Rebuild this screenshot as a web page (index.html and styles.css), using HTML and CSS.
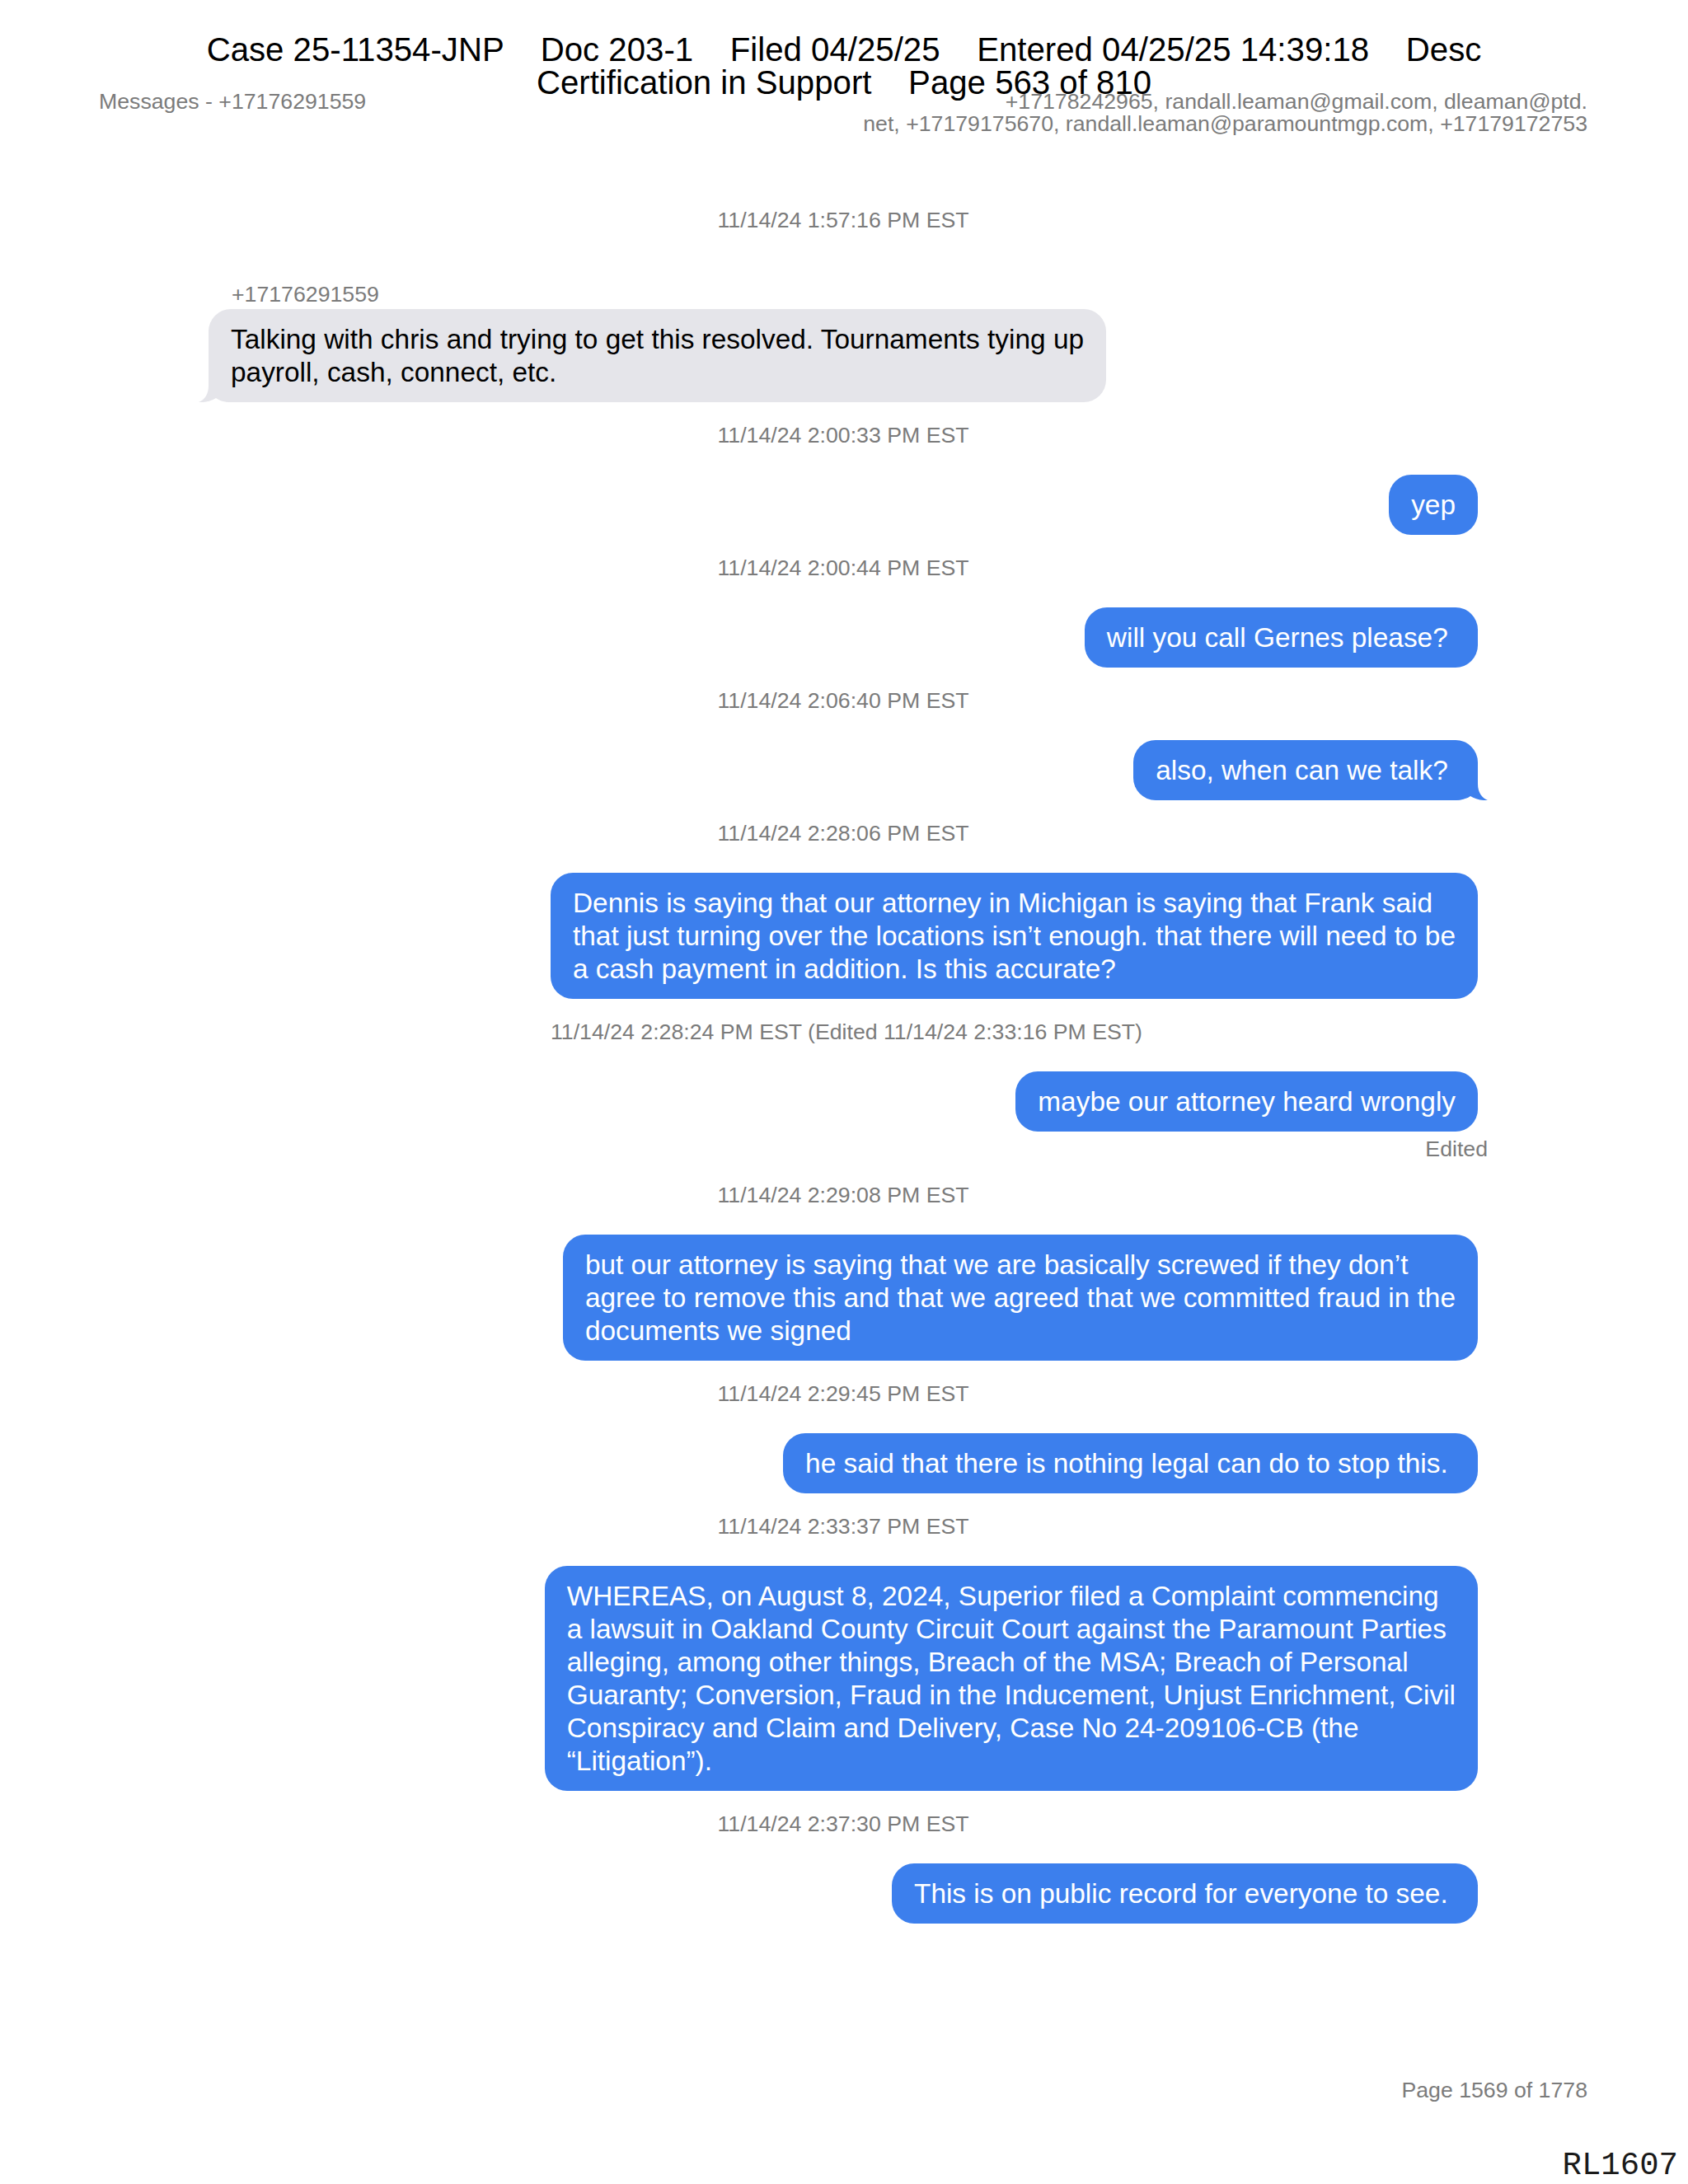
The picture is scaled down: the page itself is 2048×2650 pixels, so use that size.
FILE: index.html
```html
<!DOCTYPE html>
<html lang="en">
<head>
<meta charset="utf-8">
<title>Messages - +17176291559</title>
<link rel="stylesheet" href="styles.css">
</head>
<body>
<div class="page">
  <div class="stamp">
    <div class="stamp-line">Case 25-11354-JNP    Doc 203-1    Filed 04/25/25    Entered 04/25/25 14:39:18    Desc</div>
    <div class="stamp-line">Certification in Support    Page 563 of 810</div>
  </div>

  <header class="doc-header">
    <div class="doc-title">Messages - +17176291559</div>
    <div class="participants">+17178242965, randall.leaman@gmail.com, dleaman@ptd.<br>net, +17179175670, randall.leaman@paramountmgp.com, +17179172753</div>
  </header>

  <main class="thread">
    <div class="ts ts-first">11/14/24 1:57:16 PM EST</div>
    <div class="sender">+17176291559</div>
    <div class="bubble recv has-tail">Talking with chris and trying to get this resolved. Tournaments tying up<br>payroll, cash, connect, etc.<svg class="tail" viewBox="0 0 40 36" aria-hidden="true"><path d="M28 0 L28 16 C28 27 33 33 40 36 C33 36.6 24 34.5 19 31 C15 34 9 36 0 36 L0 0 Z"/></svg></div>

    <div class="ts">11/14/24 2:00:33 PM EST</div>
    <div class="bubble sent">yep</div>

    <div class="ts">11/14/24 2:00:44 PM EST</div>
    <div class="bubble sent">will you call Gernes please?&nbsp;</div>

    <div class="ts">11/14/24 2:06:40 PM EST</div>
    <div class="bubble sent has-tail">also, when can we talk?&nbsp;<svg class="tail" viewBox="0 0 40 36" aria-hidden="true"><path d="M28 0 L28 16 C28 27 33 33 40 36 C33 36.6 24 34.5 19 31 C15 34 9 36 0 36 L0 0 Z"/></svg></div>

    <div class="ts">11/14/24 2:28:06 PM EST</div>
    <div class="msg-group sent-group">
      <div class="bubble sent">Dennis is saying that our attorney in Michigan is saying that Frank said<br>that just turning over the locations isn’t enough. that there will need to be<br>a cash payment in addition. Is this accurate?</div>
      <div class="edit-note">11/14/24 2:28:24 PM EST (Edited 11/14/24 2:33:16 PM EST)</div>
    </div>

    <div class="msg-group sent-group edited-group">
      <div class="bubble sent">maybe our attorney heard wrongly</div>
      <div class="edited">Edited</div>
    </div>

    <div class="ts">11/14/24 2:29:08 PM EST</div>
    <div class="bubble sent">but our attorney is saying that we are basically screwed if they don’t<br>agree to remove this and that we agreed that we committed fraud in the<br>documents we signed</div>

    <div class="ts">11/14/24 2:29:45 PM EST</div>
    <div class="bubble sent">he said that there is nothing legal can do to stop this.&nbsp;</div>

    <div class="ts">11/14/24 2:33:37 PM EST</div>
    <div class="bubble sent">WHEREAS, on August 8, 2024, Superior filed a Complaint commencing<br>a lawsuit in Oakland County Circuit Court against the Paramount Parties<br>alleging, among other things, Breach of the MSA; Breach of Personal<br>Guaranty; Conversion, Fraud in the Inducement, Unjust Enrichment, Civil<br>Conspiracy and Claim and Delivery, Case No 24-209106-CB (the<br>“Litigation”).</div>

    <div class="ts">11/14/24 2:37:30 PM EST</div>
    <div class="bubble sent">This is on public record for everyone to see.&nbsp;</div>
  </main>

  <footer class="page-foot">
    <div class="page-num">Page 1569 of 1778</div>
    <div class="bates">RL1607</div>
  </footer>
</div>
</body>
</html>
```

FILE: styles.css
```css
html, body {
  margin: 0;
  padding: 0;
  background: #ffffff;
}

.page {
  position: relative;
  width: 2048px;
  height: 2650px;
  display: flex;
  flex-direction: column;
  font-family: "Liberation Sans", Arial, sans-serif;
  color: #000;
  overflow: hidden;
}

/* court filing stamp, printed over the page */
.stamp {
  position: absolute;
  top: 41px;
  left: 0;
  right: 0;
  text-align: center;
  font-size: 40.2px;
  line-height: 40px;
  color: #000;
  z-index: 2;
}

.stamp-line {
  white-space: pre;
}

.doc-header {
  display: flex;
  justify-content: space-between;
  align-items: flex-start;
  padding: 110px 122px 0 120px;
  font-size: 26.7px;
  line-height: 27px;
  color: #7b7b7b;
}

.participants {
  text-align: right;
}

.thread {
  display: flex;
  flex-direction: column;
  padding: 87px 255px 0 253px;
}

.ts {
  align-self: center;
  font-size: 26.7px;
  line-height: 32px;
  color: #7b7b7b;
  margin-top: 24px;
  margin-bottom: 32px;
}

.ts-first {
  margin-top: 0;
  margin-bottom: 58px;
}

.sender {
  font-size: 26.7px;
  line-height: 32px;
  color: #7b7b7b;
  margin-left: 28px;
  margin-bottom: 2px;
}

.bubble {
  position: relative;
  padding: 16.5px 27px;
  border-radius: 27px;
  font-size: 33.4px;
  line-height: 40px;
  white-space: nowrap;
}

.bubble.sent {
  align-self: flex-end;
  background: #3c7fed;
  color: #ffffff;
}

.bubble.recv {
  align-self: flex-start;
  background: #e5e5ea;
  color: #000000;
}

.tail {
  position: absolute;
  bottom: 0;
  width: 40px;
  height: 36px;
}

.sent .tail {
  right: -12px;
  fill: #3c7fed;
}

.recv .tail {
  left: -12px;
  fill: #e5e5ea;
  transform: scaleX(-1);
}

.msg-group {
  display: flex;
  flex-direction: column;
}

.sent-group {
  align-self: flex-end;
  align-items: flex-start;
}

.sent-group .bubble.sent {
  align-self: stretch;
}

.edit-note {
  font-size: 26.7px;
  line-height: 32px;
  color: #7b7b7b;
  margin-top: 24px;
  margin-bottom: 32px;
}

.edited-group {
  align-items: flex-end;
}

.edited {
  font-size: 26.7px;
  line-height: 32px;
  color: #7b7b7b;
  margin-top: 5px;
  margin-right: -12px;
}

.page-foot {
  margin-top: auto;
  display: flex;
  flex-direction: column;
  align-items: flex-end;
  padding: 0 12px 2px 0;
}

.page-num {
  font-size: 26.7px;
  line-height: 32px;
  color: #7b7b7b;
  margin-right: 110px;
  margin-bottom: 56px;
}

.bates {
  font-family: "Liberation Mono", "Courier New", monospace;
  font-size: 39px;
  line-height: 40px;
  color: #1a1a1a;
}
```
